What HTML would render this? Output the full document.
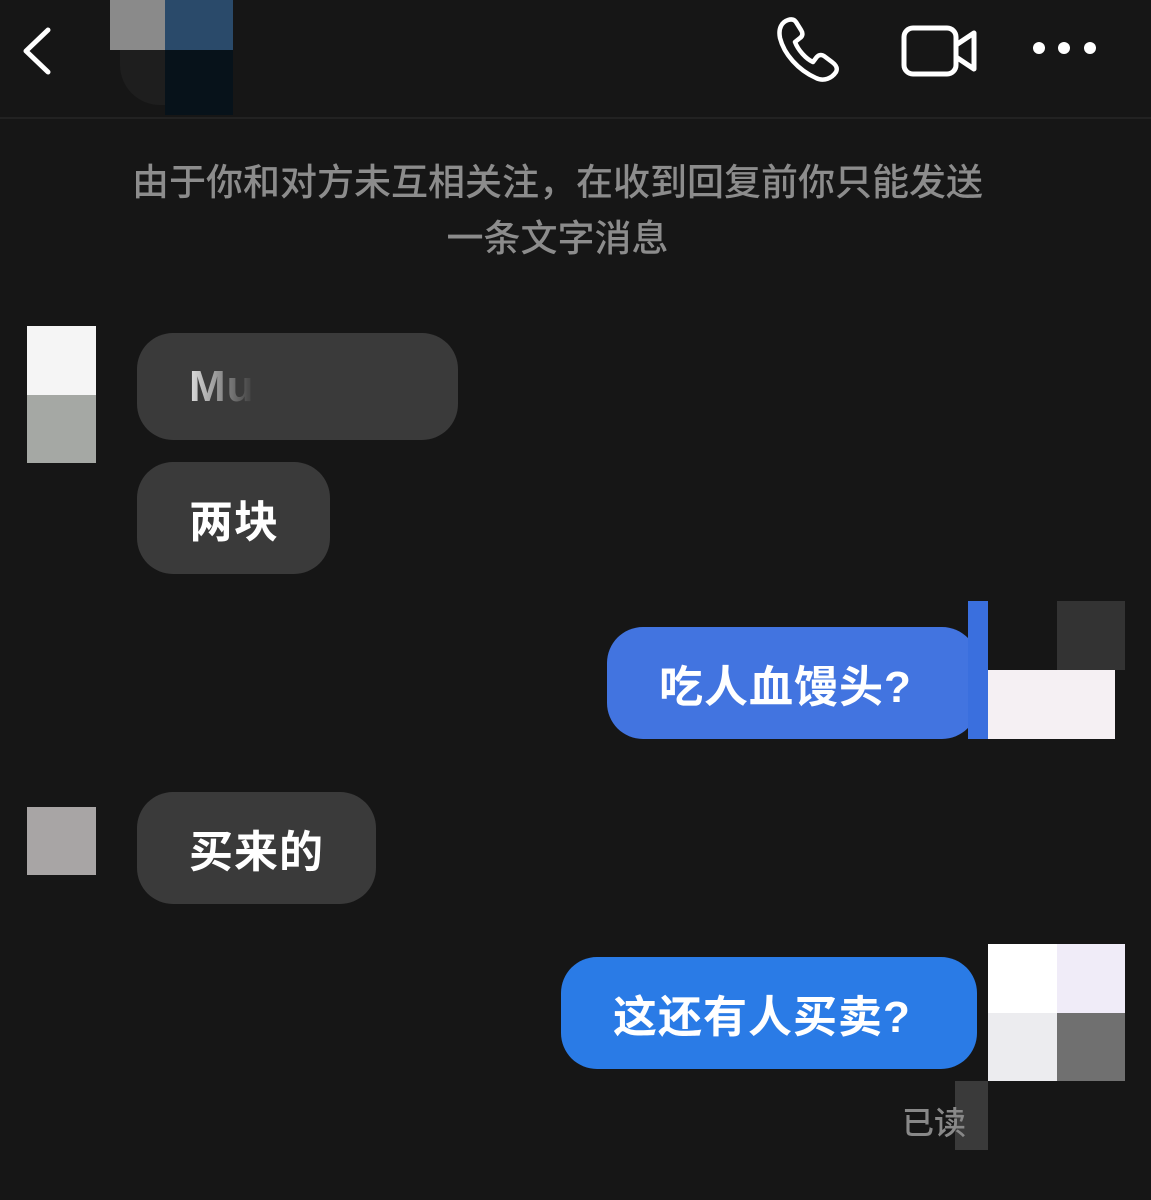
<!DOCTYPE html>
<html><head><meta charset="utf-8"><style>
*{margin:0;padding:0;box-sizing:border-box}
body{width:1151px;height:1200px;background:#161616;position:relative;overflow:hidden;font-family:"Liberation Sans","Noto Sans CJK SC",sans-serif}
.a{position:absolute}
.b{position:absolute;border-radius:36px;color:#fff;font-size:44px;font-weight:700;display:flex;align-items:center;padding-left:52px;letter-spacing:1px}
.g{background:#3a3a3a}
</style></head><body>
<svg class="a" style="left:18px;top:26px" width="36" height="50" viewBox="0 0 36 50"><path d="M30 4 L8 25 L30 46" fill="none" stroke="#fff" stroke-width="5" stroke-linecap="round" stroke-linejoin="round"/></svg>
<div class="a" style="left:110px;top:0;width:55px;height:50px;background:#8a8a8a"></div>
<div class="a" style="left:165px;top:0;width:68px;height:50px;background:#2a4a6a"></div>
<div class="a" style="left:165px;top:50px;width:68px;height:65px;background:#07121a"></div>
<div class="a" style="left:120px;top:50px;width:45px;height:55px;border-radius:0 0 0 40px;background:#1e1e1e"></div>
<svg class="a" style="left:776px;top:16px" width="70" height="68" viewBox="0 0 70 68"><path d="M12 4 C6 6 2 12 4 22 C8 38 22 54 40 62 C48 66 56 62 60 56 C62 52 60 49 56 46 L48 40 C45 38 42 39 40 42 L37 46 C30 43 22 34 19 26 L24 22 C27 20 27 17 25 14 L20 6 C18 3 15 3 12 4 Z" fill="none" stroke="#fff" stroke-width="4.5" stroke-linejoin="round"/></svg>
<svg class="a" style="left:901px;top:25px" width="78" height="52" viewBox="0 0 78 52"><rect x="3" y="3" width="52" height="46" rx="9" fill="none" stroke="#fff" stroke-width="5"/><path d="M55 20 L73 8 L73 44 L55 32" fill="none" stroke="#fff" stroke-width="5" stroke-linejoin="round"/></svg>
<div class="a" style="left:1033px;top:42px;width:12px;height:12px;border-radius:50%;background:#fff"></div>
<div class="a" style="left:1058px;top:42px;width:12px;height:12px;border-radius:50%;background:#fff"></div>
<div class="a" style="left:1084px;top:42px;width:12px;height:12px;border-radius:50%;background:#fff"></div>
<div class="a" style="left:0;top:117px;width:1151px;height:2px;background:#222"></div>
<div class="a" style="left:0;top:155px;width:1115px;text-align:center;color:#8c8c8c;font-size:37px;font-weight:500;line-height:56px">由于你和对方未互相关注，在收到回复前你只能发送<br>一条文字消息</div>
<div class="a" style="left:27px;top:326px;width:69px;height:69px;background:#f5f5f5"></div>
<div class="a" style="left:27px;top:395px;width:69px;height:68px;background:#a5a8a4"></div>
<div class="b g" style="left:137px;top:333px;width:321px;height:107px;color:#aaa"><span style="background:linear-gradient(90deg,#ddd,#3a3a3a);-webkit-background-clip:text;color:transparent">Mu</span></div>
<div class="b g" style="left:137px;top:462px;width:193px;height:112px">两块</div>
<div class="b" style="left:607px;top:627px;width:371px;height:112px;background:#4274e0">吃人血馒头?</div>
<div class="a" style="left:968px;top:601px;width:20px;height:138px;background:#3a6fde"></div>
<div class="a" style="left:1057px;top:601px;width:68px;height:69px;background:#333"></div>
<div class="a" style="left:988px;top:670px;width:127px;height:69px;background:#f5f0f3"></div>
<div class="a" style="left:27px;top:807px;width:69px;height:68px;background:#a8a5a5"></div>
<div class="b g" style="left:137px;top:792px;width:239px;height:112px">买来的</div>
<div class="b" style="left:561px;top:957px;width:416px;height:112px;background:#2a7be6">这还有人买卖?</div>
<div class="a" style="left:988px;top:944px;width:69px;height:69px;background:#fff"></div>
<div class="a" style="left:1057px;top:944px;width:68px;height:69px;background:#f0ecf8"></div>
<div class="a" style="left:988px;top:1013px;width:69px;height:68px;background:#ececef"></div>
<div class="a" style="left:1057px;top:1013px;width:68px;height:68px;background:#707070"></div>
<div class="a" style="left:955px;top:1081px;width:33px;height:69px;background:#3a3a3a"></div>
<div class="a" style="left:902px;top:1098px;color:#888;font-size:32px;font-weight:500">已读</div>
</body></html>
